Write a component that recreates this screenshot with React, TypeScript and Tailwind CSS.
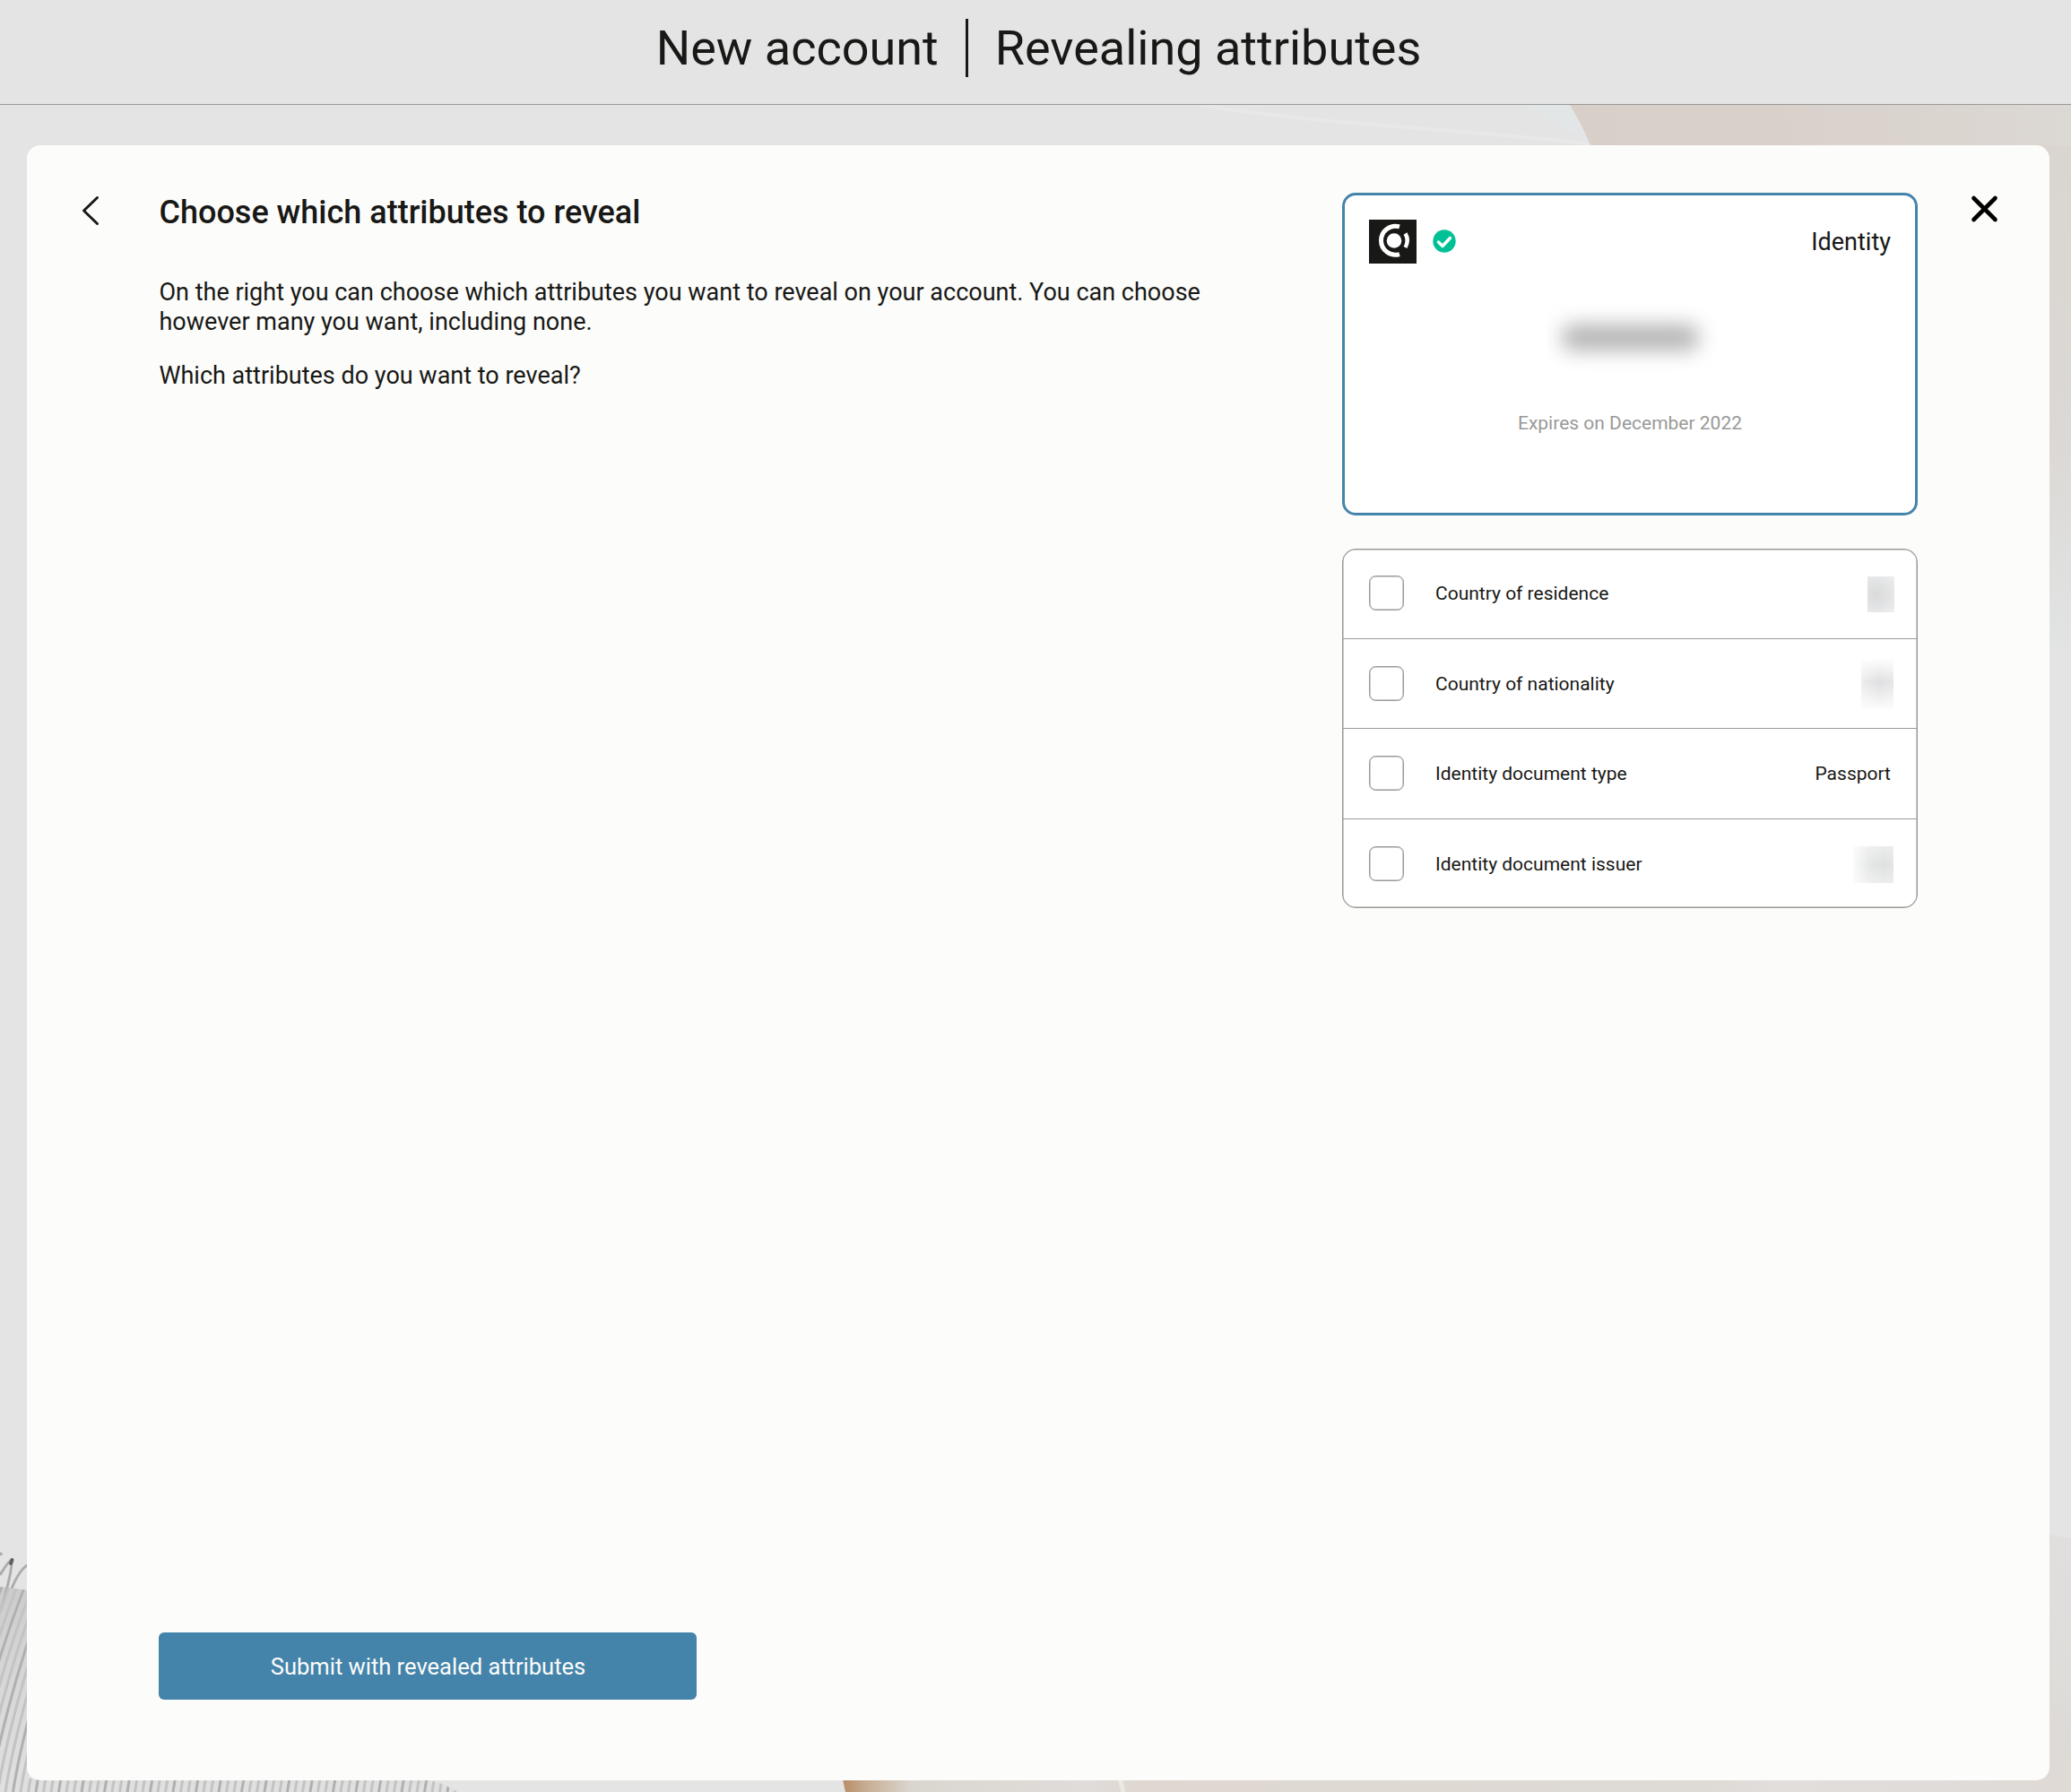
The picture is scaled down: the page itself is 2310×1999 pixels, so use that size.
import React from "react";

type Attribute = { label: string; value: React.ReactNode };

const attributes: Attribute[] = [
  {
    label: "Country of residence",
    value: <span className="-mr-1 h-10 w-[30px] bg-[radial-gradient(ellipse_at_30%_50%,#dadada,#e3e4e5_55%,#efeff0)]" />,
  },
  {
    label: "Country of nationality",
    value: (
      <span className="-mr-[3px] mb-1 h-[60px] w-9 bg-[linear-gradient(to_bottom,#ffffff_5%,#ffffff00_50%,#ffffffe0_98%),linear-gradient(to_right,#efedee,#dedfe0_55%,#e6e6e7)]" />
    ),
  },
  { label: "Identity document type", value: "Passport" },
  {
    label: "Identity document issuer",
    value: (
      <span className="-mr-[3px] mt-0.5 h-[41px] w-[45px] bg-[linear-gradient(to_bottom,#ffffff60,#ffffff00_50%,#ffffff60),linear-gradient(to_right,#fafafa,#e6e7e7_40%,#dfe0e0_75%,#e4e5e5)]" />
    ),
  },
];

/* Curved strokes of the page illustration visible in the lower left. */
const strokes = Array.from({ length: 68 }, (_, i) => i);

function Backdrop() {
  return (
    <svg className="absolute inset-0 h-full w-full" viewBox="0 0 2310 1999" fill="none">
      <defs>
        <linearGradient id="sand" x1="1750" y1="0" x2="2310" y2="0" gradientUnits="userSpaceOnUse">
          <stop offset="0" stopColor="#d8d0c8" />
          <stop offset="0.4" stopColor="#d9d0ca" />
          <stop offset="1" stopColor="#dcd8d3" />
        </linearGradient>
        <linearGradient id="side" x1="0" y1="160" x2="0" y2="722" gradientUnits="userSpaceOnUse">
          <stop offset="0" stopColor="#dad5d0" />
          <stop offset="0.6" stopColor="#dcd8d5" />
          <stop offset="0.82" stopColor="#dfdfdd" />
          <stop offset="1" stopColor="#e1e4e3" />
        </linearGradient>
        <linearGradient id="floor" x1="940" y1="0" x2="2310" y2="0" gradientUnits="userSpaceOnUse">
          <stop offset="0" stopColor="#b78d67" />
          <stop offset="0.02" stopColor="#c8ae95" />
          <stop offset="0.055" stopColor="#dad6cf" />
          <stop offset="0.2" stopColor="#e0dcda" />
          <stop offset="0.24" stopColor="#dfd8d1" />
          <stop offset="0.7" stopColor="#dedad5" />
          <stop offset="0.76" stopColor="#e1dedc" />
          <stop offset="1" stopColor="#dfdad6" />
        </linearGradient>
        <linearGradient id="lower" x1="0" y1="1712" x2="0" y2="1999" gradientUnits="userSpaceOnUse">
          <stop offset="0" stopColor="#e0dfde" />
          <stop offset="0.55" stopColor="#dfddda" />
          <stop offset="0.7" stopColor="#dddad7" />
          <stop offset="1" stopColor="#dfdad6" />
        </linearGradient>
        <linearGradient id="shade" x1="0" y1="1770" x2="0" y2="1999" gradientUnits="userSpaceOnUse">
          <stop offset="0" stopColor="#cccccc" />
          <stop offset="0.5" stopColor="#d8d8d8" />
          <stop offset="1" stopColor="#e0e0e0" />
        </linearGradient>
        <clipPath id="bundle">
          <path d="M0 1770L32 1774V1984H470Q488 1986 511 1999H0Z" />
        </clipPath>
      </defs>
      <path d="M1340 117C1460 138 1600 141 1790 162" stroke="#e8e8e8" strokeWidth="4" />
      <path d="M1700 117H1760L1774 162C1750 145 1725 130 1700 117Z" fill="#e3e6e6" />
      <path d="M1751 117H2310V162H1774Q1764 138 1751 117Z" fill="url(#sand)" />
      <path d="M2270 162H2310V722H2270Z" fill="url(#side)" />
      <path d="M2280 1711L2310 1716V1999H2280Z" fill="url(#lower)" />
      <path d="M939 1980H2310V1999H943Z" fill="url(#floor)" />
      <path d="M1249 1984L1253 1999" stroke="#ece9e3" strokeWidth="5" />
      <path d="M0 1770L32 1774V1984H470Q488 1986 511 1999H0Z" fill="url(#shade)" />
      <path
        d="M0 1757Q9 1742 13 1740Q14 1752 1 1796M13 1772Q22 1750 32 1745M0 1735L2 1732"
        stroke="#acacac"
        strokeWidth="3"
      />
      <path d="M12 1744L13.5 1740" stroke="#606060" strokeWidth="4" strokeLinecap="round" />
      <g clipPath="url(#bundle)">
        {strokes.map((i) => (
          <path
            key={i}
            d={`M${i * 8.5 - 62} 1999C${i * 8.5 - 56} 1960 ${i * 8.5 - 35} 1865 ${i * 8.5 + 2} 1770`}
            stroke={i % 3 === 0 ? "#b0b0b0" : "#c3c3c3"}
            strokeWidth="3"
          />
        ))}
      </g>
    </svg>
  );
}

export default function App() {
  return (
    <div className="relative flex h-[1999px] w-[2310px] flex-col overflow-hidden bg-[#e4e4e4] font-['Roboto',sans-serif] text-[#181816]">
      <Backdrop />
      <header className="relative flex h-[117px] items-start justify-center border-b border-[#999998] bg-[#e4e4e4] pl-[7px] pt-[21px] text-[54px] leading-[65px]">
        <h1 className="pr-[30px]">New account</h1>
        <span className="h-[65px] w-[3px] bg-[#181816]" />
        <span className="pl-[30px]">Revealing attributes</span>
      </header>

      <main className="relative ml-[30px] mt-[45px] flex h-[1824px] w-[2256px] rounded-[15px] bg-[#fcfcfa]">
        <button className="ml-[60px] mt-[56px] flex h-9 w-6 items-center" aria-label="Back">
          <svg width="24" height="36" viewBox="0 0 24 36" fill="none">
            <path d="M18.5 2.5L3.5 17L18.5 31.5" stroke="#181816" strokeWidth="3" strokeLinecap="round" strokeLinejoin="round" />
          </svg>
        </button>

        <section className="ml-[63px] flex w-[1200px] flex-col pt-[54px]">
          <h2 className="ml-[0.5px] text-[36px] font-medium leading-[42px]">Choose which attributes to reveal</h2>
          <p className="ml-[0.5px] mt-[52px] text-[27px] leading-[33px]">
            On the right you can choose which attributes you want to reveal on your account. You can choose
            <br />
            however many you want, including none.
          </p>
          <p className="ml-[0.5px] mt-[27px] text-[27px] leading-[33px]">Which attributes do you want to reveal?</p>
          <button className="mb-[90px] mt-auto h-[75px] w-[600px] rounded-[6px] bg-[#4484ab] pl-px pt-0.5 text-[25.5px] text-[#fcfcfa]">
            Submit with revealed attributes
          </button>
        </section>

        <aside className="ml-[120px] mt-[53px] flex w-[642px] flex-col gap-[37px]">
          <div className="flex h-[360px] flex-col rounded-[15px] border-[3px] border-[#4484ab] bg-white px-[27px] pt-[27px]">
            <div className="flex h-[49px] items-center">
              <svg width="53" height="49" viewBox="0 0 53 49" fill="none">
                <path d="M0 0H53V49H0Z" fill="#181816" />
                <circle cx="28" cy="23.5" r="8.3" fill="#fff" />
                <path d="M34 7.9A16 16 0 1 0 34 38.6" stroke="#fff" strokeWidth="5" />
                <path d="M40.5 15.5Q45 23 40.5 31" stroke="#fff" strokeWidth="4.5" />
              </svg>
              <svg className="mb-px ml-[17.5px]" width="26" height="26" viewBox="0 0 26 26" fill="none">
                <circle cx="13" cy="13" r="12.7" fill="#00c196" />
                <path d="M6.5 14L11 18.5L19.5 9.5" stroke="#fff" strokeWidth="3.5" strokeLinecap="round" strokeLinejoin="round" />
              </svg>
              <span className="ml-auto text-[27px] leading-8">Identity</span>
            </div>
            <div className="ml-[199px] mt-[43px] h-[76px] w-[189px] overflow-hidden px-[16px] pt-[25px]">
              <div className="h-[29px] w-[153px] rounded-xl bg-[#b5b4b4] blur-[11px]" />
            </div>
            <p className="mt-[47px] text-center text-[21px] leading-6 text-[#999998]">Expires on December 2022</p>
          </div>

          <ul className="grid h-[401px] grid-rows-[100px_100px_101px_98px] divide-y divide-[#999998] rounded-[15px] border border-[#999998] bg-white shadow-[inset_0_0_0_0.5px_#999998]">
            {attributes.map(({ label, value }) => (
              <li key={label} className="group flex items-center px-[29px] text-[21px]">
                <span className="h-[39px] w-[39px] rounded-[7.5px] border border-[#999998] shadow-[inset_0_0_0_0.5px_#999998] group-first:mb-0.5 group-[:nth-child(3)]:mb-px" />
                <span className="ml-[35px] mr-auto pt-0.5 group-first:pt-0 group-last:pt-[3px]">{label}</span>
                {typeof value === "string" ? <span className="pt-0.5">{value}</span> : value}
              </li>
            ))}
          </ul>
        </aside>

        <button className="ml-[58px] mt-[54px] h-[34px] w-[34px]" aria-label="Close">
          <svg width="34" height="34" viewBox="0 0 34 34" fill="none">
            <path d="M4.5 5L28.5 29M28.5 5L4.5 29" stroke="#000" strokeWidth="4.6" strokeLinecap="round" />
          </svg>
        </button>
      </main>
    </div>
  );
}
